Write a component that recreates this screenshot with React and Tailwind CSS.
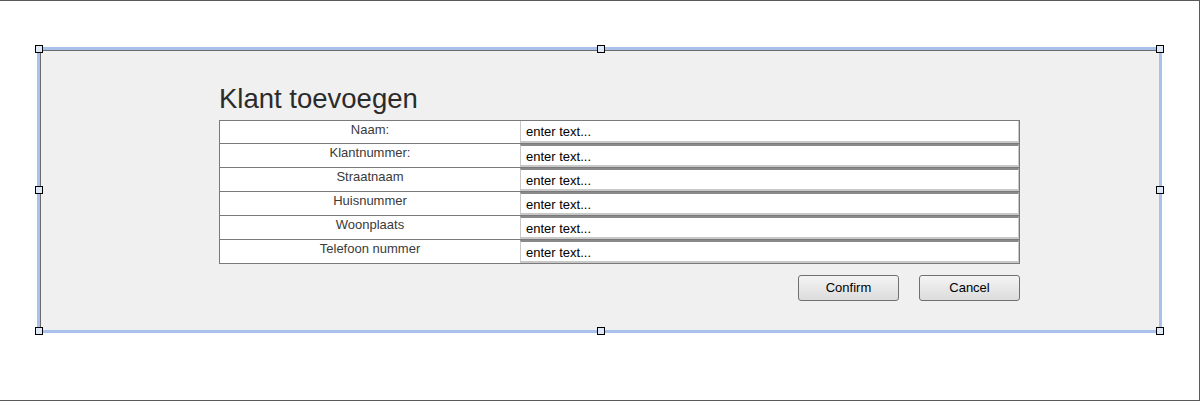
import React from 'react'

const fields = ['Naam:', 'Klantnummer:', 'Straatnaam', 'Huisnummer', 'Woonplaats', 'Telefoon nummer']

// selection handles sit on top of the frame border
function Handle({ className }) {
  return <div className={`absolute w-[8px] h-[8px] border border-black bg-[#dfe8f7] ${className}`} />
}

export default function App() {
  return (
    <div className="w-[1200px] h-[401px] bg-white border-t border-r border-b border-[#5a5a5a] font-['Liberation_Sans',Arial,sans-serif] pt-[46px] pl-[37px]">
      <div className="relative w-[1125px] h-[286px] border-[3px] border-[#a9c0ea]">
        <Handle className="-left-[5px] -top-[5px]" />
        <Handle className="left-[557px] -top-[5px]" />
        <Handle className="-right-[5px] -top-[5px]" />
        <Handle className="-left-[5px] top-[136px]" />
        <Handle className="-right-[5px] top-[136px]" />
        <Handle className="-left-[5px] -bottom-[5px]" />
        <Handle className="left-[557px] -bottom-[5px]" />
        <Handle className="-right-[5px] -bottom-[5px]" />

        <div className="h-full bg-[#f0f0f0] border-t border-l border-[#6a6a6a] pl-[178px] pt-[30px]">
          <h1 className="text-[27.5px] leading-[36px] text-[#2b2b2b] h-[39px]">Klant toevoegen</h1>

          <div className="w-[801px] border border-[#7a7a7a] bg-white">
            {fields.map((f, i) => {
              const first = i === 0
              const last = i === fields.length - 1
              return (
                <div
                  key={f}
                  className={`flex ${first ? 'h-[23px] border-b border-[#7a7a7a]' : last ? 'h-[23px]' : 'h-[24px] border-b border-[#7a7a7a]'}`}
                >
                  <div className="w-[300px] text-center text-[13px] leading-[15px] pt-[1px] text-[#3a3a3a]">{f}</div>
                  <div className="flex-1 flex flex-col">
                    <div className={`flex-1 border-l border-r border-[#c8c8c8] ${first ? 'border-t-0' : 'border-t-2 border-t-[#8a8a8a]'} pl-[5px] pt-[3px] text-[13px] leading-[15px] text-black`}>
                      enter text...
                    </div>
                    <div className="h-[2px] bg-[#c8c8c8]" />
                  </div>
                </div>
              )
            })}
          </div>

          <div className="w-[801px] flex justify-end gap-[20px] mt-[11px]">
            <button className="w-[101px] h-[26px] rounded-[3px] border border-[#707070] bg-gradient-to-b from-[#f4f4f4] to-[#dcdcdc] text-[13px] text-black">Confirm</button>
            <button className="w-[101px] h-[26px] rounded-[3px] border border-[#707070] bg-gradient-to-b from-[#f4f4f4] to-[#dcdcdc] text-[13px] text-black">Cancel</button>
          </div>
        </div>
      </div>
    </div>
  )
}
